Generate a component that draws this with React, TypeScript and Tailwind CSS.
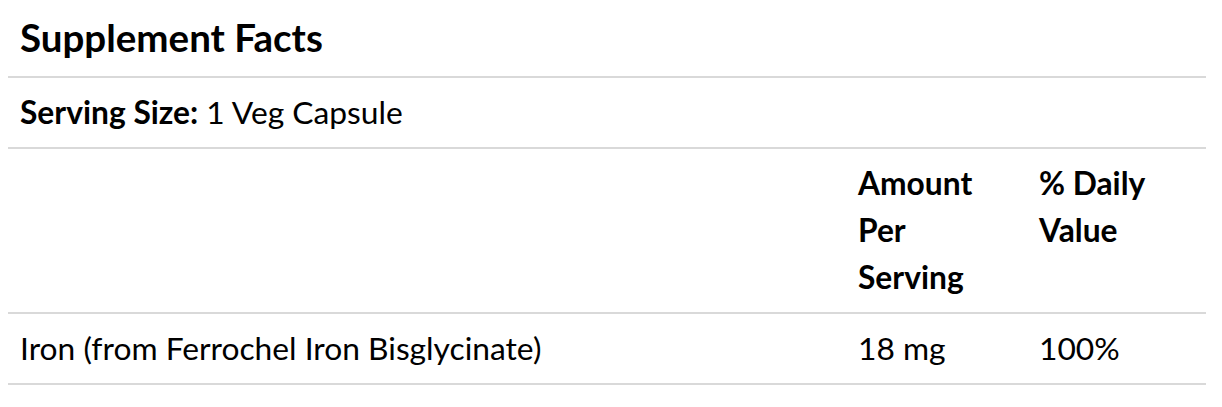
const rows = [
  { name: "Iron (from Ferrochel Iron Bisglycinate)", amount: "18 mg", dv: "100%" },
];

export default function App() {
  return (
    <div className="bg-white px-2 text-black" style={{ fontFamily: "Lato, 'Open Sans', sans-serif" }}>
      <div className="w-[1198px]">
        <h2 className="h-[76px] px-3 pt-[14px] text-[38.5px] font-bold leading-[46px]">Supplement Facts</h2>
        <div className="border-t-2 border-[#d9d9d9] px-3 py-[11px] text-[31.75px] leading-[47px]">
          <span className="font-bold">Serving Size:</span> 1 Veg Capsule
        </div>
        <div className="grid grid-cols-[838px_181px_179px] border-t-2 border-[#d9d9d9] text-[31.75px] leading-[47px]">
          <div />
          <div className="px-3 py-[11px] font-bold">
            Amount
            <br />
            Per
            <br />
            Serving
          </div>
          <div className="px-3 py-[11px] font-bold">
            % Daily
            <br />
            Value
          </div>
        </div>
        {rows.map((r) => (
          <div
            key={r.name}
            className="grid grid-cols-[838px_181px_179px] border-y-2 border-[#d9d9d9] text-[31.75px] leading-[47px]"
          >
            <div className="px-3 py-[11px]">{r.name}</div>
            <div className="px-3 py-[11px]">{r.amount}</div>
            <div className="px-3 py-[11px]">{r.dv}</div>
          </div>
        ))}
      </div>
    </div>
  );
}
